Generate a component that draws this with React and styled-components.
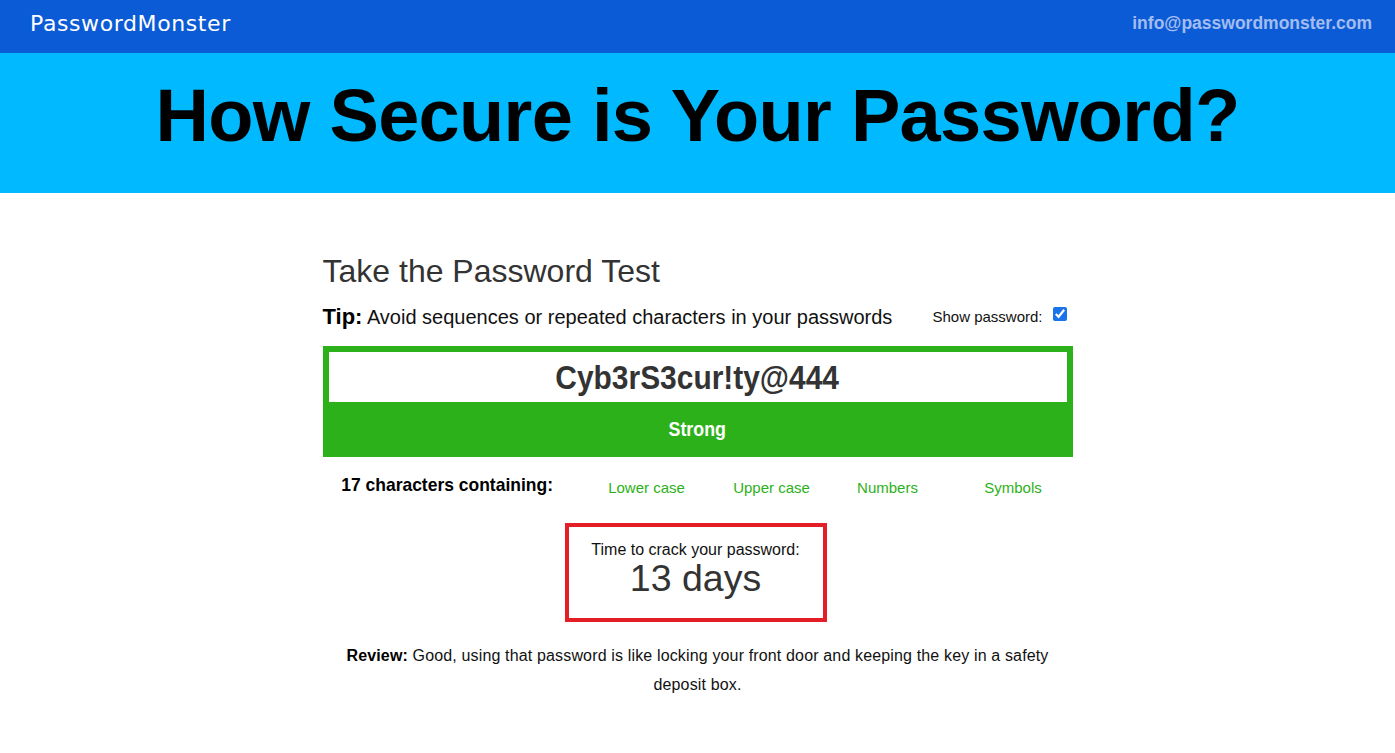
import React from "react";
import styled, { createGlobalStyle } from "styled-components";

const Global = createGlobalStyle`
  html, body { margin: 0; padding: 0; background: #fff; }
  body { font-family: "Liberation Sans", Arial, sans-serif; color: #333; }
  * { box-sizing: border-box; }
`;

const TopBar = styled.header`
  height: 53px;
  background: #0b5bd6;
  display: flex;
  align-items: center;
  justify-content: space-between;
  padding: 0 23px 0 30px;
`;

const Logo = styled.div`
  color: #fff;
  font-family: "DejaVu Sans", sans-serif;
  font-size: 22px;
  letter-spacing: 0.6px;
  margin-top: -6px;
`;

const Email = styled.a`
  color: #a3bdf0;
  font-weight: bold;
  font-size: 17.5px;
  text-decoration: none;
  margin-top: -6px;
`;

const Banner = styled.section`
  height: 140px;
  background: #00b9ff;
  display: flex;
  justify-content: center;
  align-items: center;
`;

const Headline = styled.h1`
  margin: 0;
  margin-top: -16px;
  color: #000;
  font-family: "Liberation Sans", Arial, sans-serif;
  font-weight: bold;
  font-size: 74px;
  letter-spacing: -0.7px;
`;

const Main = styled.main`
  width: 750px;
  margin: 0 auto;
  padding-top: 56px;
`;

const Title = styled.h2`
  margin: 0;
  font-weight: normal;
  font-size: 32px;
  color: #333;
  line-height: 44px;
`;

const TipRow = styled.div`
  display: flex;
  justify-content: space-between;
  align-items: center;
  margin-top: 9px;
  padding-right: 6px;
  height: 30px;
`;

const Tip = styled.p`
  margin: 0;
  font-size: 20px;
  color: #111;
  b { font-size: 22px; color: #000; }
`;

const ShowLabel = styled.label`
  font-size: 15px;
  color: #111;
  display: flex;
  align-items: center;
  gap: 10px;
  margin-top: -2px;
  input { margin: 0; width: 14px; height: 14px; accent-color: #1a73e8; position: relative; top: -2px; }
`;

const MeterBox = styled.div`
  margin-top: 14px;
  background: #2cb11a;
  padding: 6px 6px 0;
`;

const Narrow = styled.span`
  display: inline-block;
  transform: scaleX(${p => p.$x || 0.88});
  white-space: nowrap;
`;

const PwInput = styled.div`
  background: #fff;
  height: 50px;
  display: flex;
  align-items: center;
  justify-content: center;
  font-weight: bold;
  font-size: 34px;
  color: #333;
`;

const Strength = styled.div`
  height: 55px;
  display: flex;
  align-items: center;
  justify-content: center;
  color: #fff;
  font-weight: bold;
  font-size: 20px;
`;

const CharRow = styled.div`
  display: grid;
  grid-template-columns: 249px 150px 100px 132px 119px;
  margin-top: 17px;
  align-items: start;
`;

const CharCount = styled.div`
  text-align: center;
  font-weight: bold;
  font-size: 19px;
  color: #000;
`;

const CharType = styled.div`
  text-align: center;
  font-size: 15px;
  color: ${p => (p.$on ? "#2cb11a" : "#bbb")};
  padding-top: 5px;
`;

const CrackBox = styled.div`
  width: 262px;
  height: 99px;
  margin: 27px 0 0 242px;
  border: 4px solid #e41e26;
  display: flex;
  flex-direction: column;
  align-items: center;
  padding-top: 14px;
`;

const CrackLabel = styled.div`
  font-size: 16px;
  line-height: 18px;
  color: #111;
`;

const CrackValue = styled.div`
  font-size: 37.5px;
  color: #333;
  line-height: 38px;
`;

const Review = styled.p`
  margin: 19px auto 0;
  width: 720px;
  text-align: center;
  font-size: 16px;
  letter-spacing: 0.15px;
  line-height: 29px;
  color: #111;
  b { color: #000; }
`;

export default function App() {
  const types = ["Lower case", "Upper case", "Numbers", "Symbols"];
  return (
    <>
      <Global />
      <TopBar>
        <Logo>PasswordMonster</Logo>
        <Email href="#">info@passwordmonster.com</Email>
      </TopBar>
      <Banner>
        <Headline>How Secure is Your Password?</Headline>
      </Banner>
      <Main>
        <Title>Take the Password Test</Title>
        <TipRow>
          <Tip><b>Tip:</b> Avoid sequences or repeated characters in your passwords</Tip>
          <ShowLabel>Show password: <input type="checkbox" defaultChecked /></ShowLabel>
        </TipRow>
        <MeterBox>
          <PwInput><Narrow $x={0.88}>Cyb3rS3cur!ty@444</Narrow></PwInput>
          <Strength><Narrow $x={0.89}>Strong</Narrow></Strength>
        </MeterBox>
        <CharRow>
          <CharCount><Narrow $x={0.92}>17 characters containing:</Narrow></CharCount>
          {types.map(t => <CharType key={t} $on>{t}</CharType>)}
        </CharRow>
        <CrackBox>
          <CrackLabel>Time to crack your password:</CrackLabel>
          <CrackValue>13 days</CrackValue>
        </CrackBox>
        <Review><b>Review:</b> Good, using that password is like locking your front door and keeping the key in a safety deposit box.</Review>
      </Main>
    </>
  );
}
